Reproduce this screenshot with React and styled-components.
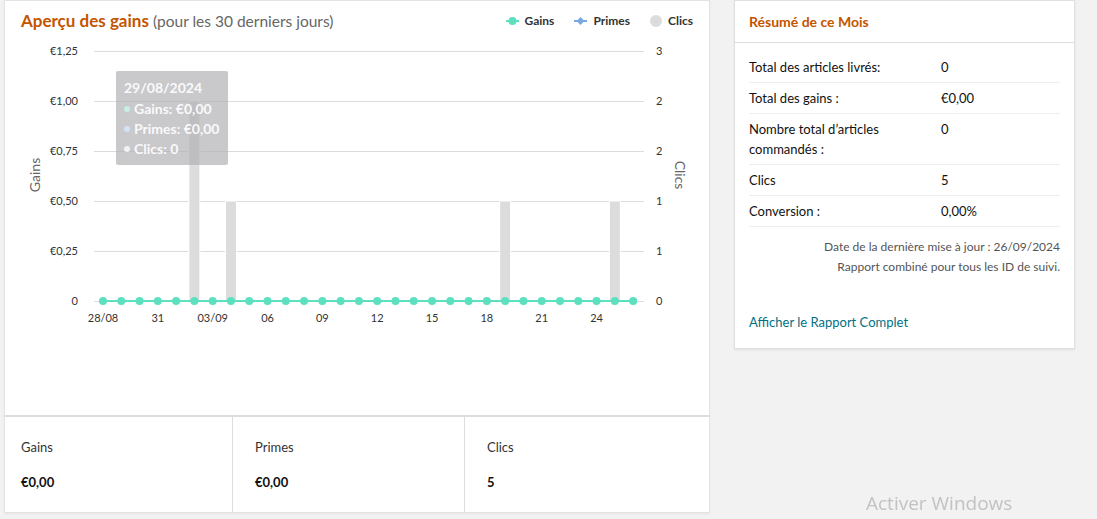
import styled, { createGlobalStyle } from 'styled-components'

const GlobalStyle = createGlobalStyle`
    * { box-sizing: border-box; }
    body {
        margin: 0;
        background: #f2f2f2;
        font-family: Lato, "Noto Sans", sans-serif;
        color: #111;
    }
`

const GREEN = '#5de0bf'
const days = ['28/08', '29', '30', '31', '01', '02', '03/09', '04', '05', '06', '07', '08', '09', '10', '11', '12', '13', '14', '15', '16', '17', '18', '19', '20', '21', '22', '23', '24', '25', '26']
const clics = { 5: 2, 7: 1, 22: 1, 28: 1 }
const x0 = 103
const step = 18.28
const yZero = 301
const leftTicks = ['0', '€0,25', '€0,50', '€0,75', '€1,00', '€1,25']
const rightTicks = ['0', '1', '1', '2', '2', '3']

const summary = [
    ['Total des articles livrés:', '0'],
    ['Total des gains :', '€0,00'],
    ['Nombre total d’articles commandés :', '0'],
    ['Clics', '5'],
    ['Conversion :', '0,00%'],
]

function Chart() {
    return (
        <svg width="705" height="378" viewBox="5 37 705 378" style={{ display: 'block' }}>
            {leftTicks.map((t, i) => {
                const y = yZero - i * 50
                return (
                    <g key={i}>
                        <line x1="94" x2="644" y1={y + 0.5} y2={y + 0.5} stroke="#dcdcdc" />
                        <text x="78" y={y + 4} textAnchor="end" fontSize="11" fill="#333">{t}</text>
                        <text x="656" y={y + 4} fontSize="11" fill="#333">{rightTicks[i]}</text>
                    </g>
                )
            })}
            {Object.entries(clics).map(([i, v]) => {
                const cx = x0 + i * step
                return <rect key={i} x={cx - 5.5} y={yZero - v * 100} width="11" height={v * 100} fill="#dcdcdc" stroke="#fff" strokeWidth="1" />
            })}
            <line x1={x0} x2={x0 + 29 * step} y1={yZero} y2={yZero} stroke={GREEN} strokeWidth="2" />
            {days.map((d, i) => (
                <circle key={i} cx={x0 + i * step} cy={yZero} r="4" fill={GREEN} />
            ))}
            {days.map((d, i) => i % 3 === 0 && (
                <text key={i} x={x0 + i * step} y="322" textAnchor="middle" fontSize="11" fill="#333">{d}</text>
            ))}
            <text transform="translate(40 175) rotate(-90)" textAnchor="middle" fontSize="14" fill="#666">Gains</text>
            <text transform="translate(675 175) rotate(90)" textAnchor="middle" fontSize="14" fill="#666">Clics</text>
        </svg>
    )
}

function Marker({ type }) {
    if (type === 'clics') {
        return <svg width="12" height="12"><circle cx="6" cy="6" r="6" fill="#dcdcdc" /></svg>
    }
    const color = type === 'gains' ? GREEN : '#7aa8e2'
    return (
        <svg width="13" height="10">
            <line x1="0" x2="13" y1="5" y2="5" stroke={color} strokeWidth="2" />
            {type === 'gains'
                ? <circle cx="6.5" cy="5" r="4" fill={color} />
                : <polygon points="6.5,1 10.5,5 6.5,9 2.5,5" fill={color} />}
        </svg>
    )
}

function App() {
    return (
        <Page>
            <GlobalStyle />
            <Main>
                <ChartSection>
                    <ChartHeader>
                        <Title>Aperçu des gains <Sub>(pour les 30 derniers jours)</Sub></Title>
                        <Legend>
                            <LegendItem><Marker type="gains" />Gains</LegendItem>
                            <LegendItem><Marker type="primes" />Primes</LegendItem>
                            <LegendItem><Marker type="clics" />Clics</LegendItem>
                        </Legend>
                    </ChartHeader>
                    <Chart />
                    <Tooltip>
                        <TipDate>29/08/2024</TipDate>
                        <TipRow $dot="#c6f0e4">Gains: €0,00</TipRow>
                        <TipRow $dot="#d4e2f4">Primes: €0,00</TipRow>
                        <TipRow $dot="#f2f2f2">Clics: 0</TipRow>
                    </Tooltip>
                </ChartSection>
                <Stats>
                    <Stat><StatLabel>Gains</StatLabel><StatValue>€0,00</StatValue></Stat>
                    <Stat><StatLabel>Primes</StatLabel><StatValue>€0,00</StatValue></Stat>
                    <Stat><StatLabel>Clics</StatLabel><StatValue>5</StatValue></Stat>
                </Stats>
            </Main>
            <Side>
                <SideHeader>Résumé de ce Mois</SideHeader>
                <SideBody>
                    {summary.map(([label, value]) => (
                        <Row key={label}>
                            <RowLabel>{label}</RowLabel>
                            <RowValue>{value}</RowValue>
                        </Row>
                    ))}
                    <Notes>
                        <div>Date de la dernière mise à jour : 26/09/2024</div>
                        <div>Rapport combiné pour tous les ID de suivi.</div>
                    </Notes>
                    <Link href="#">Afficher le Rapport Complet</Link>
                </SideBody>
            </Side>
            <Watermark>Activer Windows</Watermark>
        </Page>
    )
}

const Page = styled.div`
    display: flex;
    align-items: flex-start;
    gap: 24px;
    padding-left: 4px;
    height: 519px;
    overflow: hidden;
`
const Main = styled.div`
    width: 706px;
    height: 513px;
    background: #fff;
    border: 1px solid #e3e3e3;
    box-shadow: 0 1px 2px rgba(0, 0, 0, 0.06);
    display: flex;
    flex-direction: column;
`
const ChartSection = styled.div`
    position: relative;
    height: 416px;
    border-bottom: 2px solid #dddddd;
`
const ChartHeader = styled.div`
    height: 36px;
    display: flex;
    align-items: center;
    justify-content: space-between;
    padding: 3px 16px 0 16px;
`
const Title = styled.h2`
    margin: 0;
    font-size: 17px;
    font-weight: 700;
    color: #c45500;
`
const Sub = styled.span`
    font-size: 15.5px;
    font-weight: 400;
    color: #666;
`
const Legend = styled.div`
    display: flex;
    gap: 20px;
`
const LegendItem = styled.div`
    display: flex;
    align-items: center;
    gap: 6px;
    font-size: 12px;
    font-weight: 700;
    color: #333;
`
const Tooltip = styled.div`
    position: absolute;
    left: 111px;
    top: 70px;
    width: 112px;
    height: 94px;
    padding: 7px 8px;
    border-radius: 2px;
    background: rgba(175, 176, 180, 0.68);
    color: rgba(255, 255, 255, 0.92);
    font-size: 14px;
    line-height: 20px;
`
const TipDate = styled.div`
    font-weight: 700;
    margin-bottom: 1px;
`
const TipRow = styled.div`
    display: flex;
    align-items: center;
    font-weight: 700;
    &::before {
        content: '';
        width: 6px;
        height: 6px;
        border-radius: 50%;
        margin-right: 4px;
        background: ${p => p.$dot};
    }
`
const Stats = styled.div`
    flex: 1;
    display: grid;
    grid-template-columns: 227px 232px 1fr;
`
const Stat = styled.div`
    padding: 22px 22px 0;
    border-left: 1px solid #dddddd;
    &:first-child {
        border-left: none;
        padding-left: 16px;
    }
`
const StatLabel = styled.div`
    font-size: 13px;
    color: #333;
    line-height: 16px;
`
const StatValue = styled.div`
    margin-top: 19px;
    font-size: 13px;
    font-weight: 700;
    color: #111;
    line-height: 16px;
`
const Side = styled.div`
    width: 341px;
    background: #fff;
    border: 1px solid #e0e0e0;
    box-shadow: 0 1px 2px rgba(0, 0, 0, 0.08);
`
const SideHeader = styled.div`
    height: 42px;
    display: flex;
    align-items: center;
    padding: 0 14px;
    border-bottom: 1px solid #dddddd;
    font-size: 14px;
    font-weight: 700;
    color: #c45500;
`
const SideBody = styled.div`
    padding: 9px 14px 16px;
    display: flex;
    flex-direction: column;
`
const Row = styled.div`
    display: grid;
    grid-template-columns: 192px 1fr;
    padding: 5px 0 5px;
    border-bottom: 1px solid #eeeeee;
    font-size: 13px;
    line-height: 20px;
`
const RowLabel = styled.div`
    padding-right: 30px;
`
const RowValue = styled.div``
const Notes = styled.div`
    margin-top: 10px;
    text-align: right;
    font-size: 12px;
    line-height: 20px;
    color: #555;
`
const Link = styled.a`
    margin-top: 35px;
    font-size: 13px;
    line-height: 20px;
    color: #007185;
    text-decoration: none;
`
const Watermark = styled.div`
    position: fixed;
    left: 866px;
    top: 490px;
    font-family: "Open Sans", sans-serif;
    font-size: 19px;
    color: #c2c2c2;
`

export default App
